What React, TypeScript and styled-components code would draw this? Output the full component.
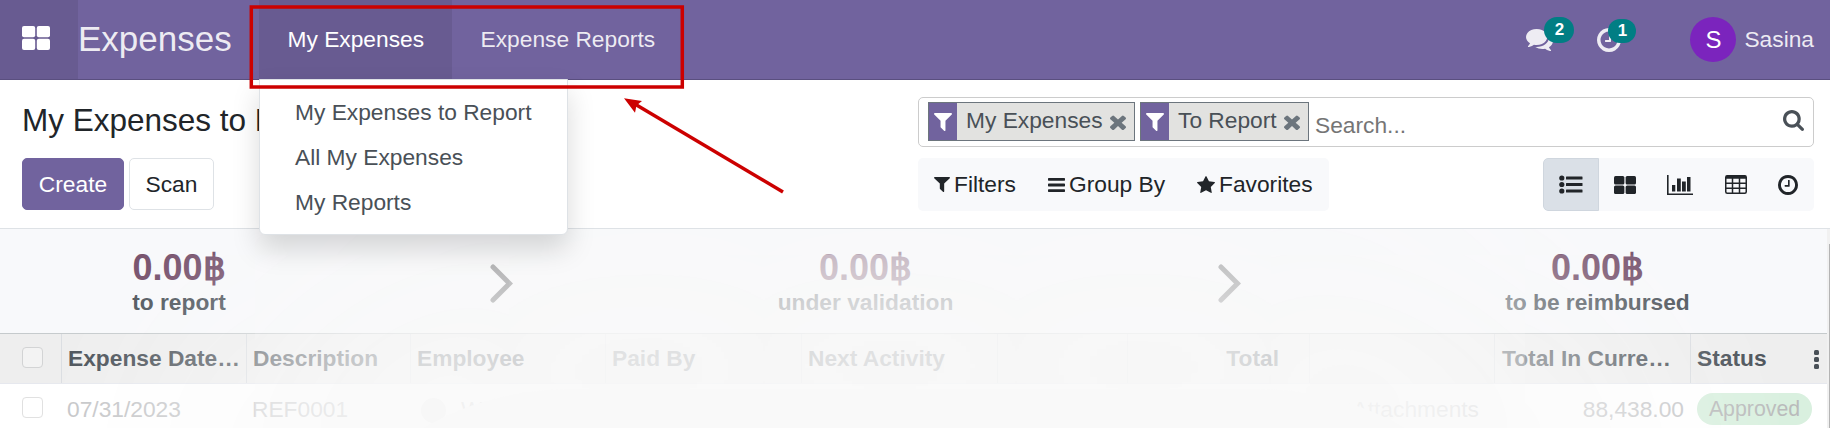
import React from 'react';
import styled, { createGlobalStyle } from 'styled-components';

const Global = createGlobalStyle`
  *, *::before, *::after { box-sizing: border-box; }
  body { margin: 0; background: #fff; overflow: hidden; }
`;

const Page = styled.div`
  position: relative;
  width: 1830px;
  height: 428px;
  overflow: hidden;
  display: flex;
  flex-direction: column;
  background: #fff;
  color: #212529;
  font: 22.75px/1.5 "Liberation Sans", Arial, sans-serif;
  white-space: nowrap;
`;

const Navbar = styled.header`
  display: flex;
  flex: none;
  height: 80px;
  background: #71639e;
  border-bottom: 1px solid #5a4f7f;
  color: rgba(255, 255, 255, 0.88);
`;

const AppsButton = styled.div`
  width: 78px;
  padding: 25px 0 0 22px;
  background: rgba(0, 0, 0, 0.08);
  color: #fff;
`;

const Brand = styled.div`
  width: 181px;
  font-size: 35px;
  line-height: 78px;
`;

const MenuEntry = styled.div<{ $active?: boolean }>`
  position: relative;
  padding: 0 28px 0 28.5px;
  line-height: 78px;
  color: ${(p) => (p.$active ? '#fff' : 'inherit')};
  background: ${(p) => (p.$active ? 'rgba(0, 0, 0, 0.08)' : 'none')};
`;

const Dropdown = styled.div`
  position: absolute;
  z-index: 5;
  top: 79px;
  left: 0;
  width: 309px;
  height: 156px;
  padding-top: 11px;
  background: #fff;
  border: 1px solid #dee2e6;
  border-radius: 0 0 6px 6px;
  box-shadow: 0 14px 28px rgba(0, 0, 0, 0.15);
  color: #495057;
`;

const DropdownItem = styled.div`
  height: 45px;
  padding-left: 35px;
  line-height: 43px;
`;

const Systray = styled.div`
  display: flex;
  align-items: center;
  margin-left: auto;
  padding-right: 16px;
`;

const TrayItem = styled.div<{ $gap: number }>`
  position: relative;
  display: flex;
  margin-right: ${(p) => p.$gap}px;
`;

const Counter = styled.span<{ $w: number; $h: number; $x: number; $y: number }>`
  position: absolute;
  left: ${(p) => p.$x}px;
  top: ${(p) => p.$y}px;
  width: ${(p) => p.$w}px;
  height: ${(p) => p.$h}px;
  border-radius: 13px;
  background: #017e84;
  color: #fff;
  font-size: 17px;
  font-weight: 700;
  line-height: ${(p) => p.$h}px;
  text-align: center;
`;

const Avatar = styled.div`
  width: 46px;
  height: 45px;
  margin-right: 8px;
  border-radius: 50%;
  background: #7b24bd;
  color: #fff;
  font-size: 24px;
  line-height: 45px;
  text-align: center;
`;

const ControlPanel = styled.section`
  display: flex;
  flex: none;
  justify-content: space-between;
  height: 149px;
  padding: 17px 16px 0 22px;
  border-bottom: 1px solid #dee2e6;
`;

const Title = styled.h1`
  height: 61px;
  margin: 0;
  font-size: 31.5px;
  font-weight: 400;
  line-height: 47px;
`;

const ButtonRow = styled.div`
  display: flex;
  gap: 5px;
`;

const Button = styled.button<{ $primary?: boolean }>`
  height: 52px;
  width: ${(p) => (p.$primary ? 102 : 85)}px;
  padding: 0;
  border: 1px solid ${(p) => (p.$primary ? '#71639e' : '#dee2e6')};
  border-radius: 5px;
  background: ${(p) => (p.$primary ? '#71639e' : '#fff')};
  color: ${(p) => (p.$primary ? '#fff' : '#212529')};
  font: inherit;
`;

const SearchColumn = styled.div`
  display: flex;
  flex-direction: column;
  gap: 11px;
  width: 896px;
`;

const SearchBox = styled.div`
  display: flex;
  height: 50px;
  padding: 4px 9px 0 9px;
  border: 1px solid #ccc;
  border-radius: 5px;
`;

const Facet = styled.div<{ $w: number }>`
  display: flex;
  width: ${(p) => p.$w}px;
  height: 39px;
  margin-right: 5px;
  border: 1px solid #6c757d;
  background: #e2e2e0;
  color: #495057;
  line-height: 34px;
`;

const FacetIcon = styled.span`
  display: flex;
  align-items: center;
  justify-content: center;
  width: 28px;
  height: 37px;
  margin-right: 9px;
  background: #71639e;
  color: #fff;
`;

const FacetClose = styled.span`
  display: flex;
  margin: 11px 0 0 7px;
  color: #6c757d;
`;

const SearchButton = styled.span`
  padding-top: 8px;
  color: #495057;
  line-height: 0;
`;

const Placeholder = styled.span`
  flex: 1;
  padding: 6px 0 0 1px;
  color: #757575;
`;

const Tools = styled.div`
  display: flex;
  justify-content: space-between;
  height: 53px;
`;

const FilterBar = styled.div`
  display: flex;
  align-items: center;
  width: 411px;
  padding-left: 16px;
  border-radius: 5px;
  background: #f8f9fb;
`;

const FilterItem = styled.div<{ $w: number }>`
  display: flex;
  align-items: center;
  width: ${(p) => p.$w}px;
  gap: 4px;
`;

const Switcher = styled.div`
  display: flex;
  border-radius: 5px;
  background: #f8f9fb;
  overflow: hidden;
`;

const ViewButton = styled.div<{ $w: number; $active?: boolean }>`
  display: flex;
  align-items: center;
  justify-content: center;
  width: ${(p) => p.$w}px;
  border: 1px solid ${(p) => (p.$active ? '#cfd6de' : 'transparent')};
  border-radius: ${(p) => (p.$active ? '5px 0 0 5px' : '0')};
  background: ${(p) => (p.$active ? '#dae0e7' : 'none')};
`;

const Content = styled.main`
  position: relative;
  flex: 1;
  width: 1827px;
  overflow: hidden;
`;

const Summary = styled.div`
  display: flex;
  align-items: flex-start;
  justify-content: space-around;
  height: 105px;
  padding: 18px 5px 0 0;
  background: #f8f9fb;
  border-bottom: 1px solid #c5cacc;
  font-weight: 700;
  text-align: center;
`;

const Amount = styled.div`
  color: #714b67;
  font-size: 36px;
  line-height: 42px;
`;

const AmountLabel = styled.div`
  color: #495057;
  line-height: 27px;
`;

const columns = '61px 185px 164px 195px 196px 196px 130px 182px 185px 196px 137px';

const HeaderRow = styled.div`
  display: grid;
  grid-template-columns: ${columns};
  height: 50px;
  background: #eee;
  border-bottom: 1px solid #e6e8ee;
  color: #495057;
  font-weight: 700;
  line-height: 48px;
`;

const BodyRow = styled.div`
  display: grid;
  grid-template-columns: ${columns};
  height: 50px;
  color: #c4c5c7;
  line-height: 51px;
`;

const Cell = styled.div<{ $right?: number; $line?: boolean; $left?: number }>`
  display: flex;
  align-items: flex-start;
  justify-content: ${(p) => (p.$right ? 'flex-end' : 'flex-start')};
  padding-left: ${(p) => p.$left ?? 6}px;
  padding-right: ${(p) => p.$right ?? 0}px;
  border-left: 1px solid ${(p) => (p.$line ? '#dadde1' : 'transparent')};
`;

const Checkbox = styled.span<{ $faint?: boolean }>`
  width: 21px;
  height: 21px;
  margin-top: 13px;
  border: 1px solid ${(p) => (p.$faint ? '#e0e0e0' : '#d2d3d4')};
  border-radius: 4px;
  background: ${(p) => (p.$faint ? '#fff' : '#f3f3f3')};
`;

const Person = styled.span`
  width: 25px;
  height: 25px;
  margin: 14px 15px 0 4px;
  border-radius: 50%;
  background: #e9e9e9;
`;

const StatusPill = styled.span`
  width: 115px;
  height: 32px;
  margin-top: 9px;
  border-radius: 16px;
  background: #d9f0df;
  color: #b9bbbb;
  font-size: 21.3px;
  line-height: 33px;
  text-align: center;
`;

const Dots = styled.span`
  display: flex;
  flex-direction: column;
  gap: 2px;
  margin: 16px 8px 0 auto;
`;

const Dot = styled.i`
  width: 5px;
  height: 5px;
  border-radius: 1.5px;
  background: #495057;
`;

const Veil = styled.div`
  position: absolute;
  left: 345px;
  top: 160px;
  width: 1138px;
  height: 800px;
  border-radius: 20%;
  background: #f9f9f9;
  box-shadow: 0 0 210px 175px #f9f9f9;
`;

const ScrollTrack = styled.div`
  position: absolute;
  right: 0;
  top: 229px;
  width: 3px;
  height: 199px;
  padding-top: 15px;
  background: #f1f1f1;
`;

const ScrollThumb = styled.div`
  height: 100%;
  margin-left: 2px;
  background: #b4b4b4;
`;

const Annotation = styled.svg`
  position: absolute;
  inset: 0;
  z-index: 10;
`;

const paths = {
  bars: 'M1664 1344v128q0 26-19 45t-45 19H192q-26 0-45-19t-19-45v-128q0-26 19-45t45-19h1408q26 0 45 19t19 45zm0-512v128q0 26-19 45t-45 19H192q-26 0-45-19t-19-45V832q0-26 19-45t45-19h1408q26 0 45 19t19 45zm0-512v128q0 26-19 45t-45 19H192q-26 0-45-19t-19-45V320q0-26 19-45t45-19h1408q26 0 45 19t19 45z',
  clock: 'M1024 544v448q0 14-9 23t-23 9H672q-14 0-23-9t-9-23v-64q0-14 9-23t23-9h224V544q0-14 9-23t23-9h64q14 0 23 9t9 23zm416 352q0-148-73-273t-198-198-273-73-273 73-198 198-73 273 73 273 198 198 273 73 273-73 198-198 73-273zm224 0q0 209-103 385.500T1281.500 1561 896 1664t-385.500-103T231 1281.500 128 896t103-385.500T510.500 231 896 128t385.500 103T1561 510.500 1664 896z',
  comments: 'M1408 768q0 139-94 257t-256.500 186.500T704 1280q-86 0-176-16-124 88-278 128-36 9-86 16h-3q-11 0-20.500-8t-11.500-21q-1-3-1-6.500t.5-6.500 2-6l2.500-5 3.500-5.500 4-5 4.500-5 4-4.500q5-6 23-25t26-29.500 22.500-29 25-38.500 20.500-44q-124-72-195-177T0 768q0-139 94-257t256.500-186.500T704 256t353.500 68.500T1314 511t94 257zm384 256q0 120-71 224.500T1526 1425q10 24 20.500 44t25 38.500 22.500 29 26 29.500 23 25q1 1 4 4.500t4.500 5 4 5 3.500 5.500l2.500 5 2 6 .5 6.500-1 6.500q-3 14-13 22t-22 7q-50-7-86-16-154-40-278-128-90 16-176 16-271 0-472-132 58 4 88 4 161 0 309-45t264-129q125-92 192-212t67-254q0-77-23-152 129 71 204 178t75 230z',
  search: 'M1216 832q0-185-131.500-316.500T768 384 451.500 515.500 320 832t131.500 316.500T768 1280t316.500-131.500T1216 832zm512 832q0 52-38 90t-90 38q-54 0-90-38l-343-342q-179 124-399 124-143 0-273.500-55.500t-225-150-150-225T64 832t55.500-273.500 150-225 225-150T768 128t273.500 55.500 225 150 150 225T1472 832q0 220-124 399l343 343q37 37 37 90z',
  star: 'M1728 647q0 22-26 48l-363 354 86 500q1 7 1 20 0 21-10.500 35.500T1385 1619q-19 0-40-12l-449-236-449 236q-22 12-40 12-21 0-31.500-14.500T365 1569q0-6 2-20l86-500L89 695q-25-27-25-48 0-37 56-46l502-73L847 73q19-41 49-41t49 41l225 455 502 73q56 9 56 46z',
  times: 'M1490 1322q0 40-28 68l-136 136q-28 28-68 28t-68-28l-294-294-294 294q-28 28-68 28t-68-28l-136-136q-28-28-28-68t28-68l294-294-294-294q-28-28-28-68t28-68l136-136q28-28 68-28t68 28l294 294 294-294q28-28 68-28t68 28l136 136q28 28 28 68t-28 68l-294 294 294 294q28 28 28 68z',
  filter: 'M1595 295q17 41-14 70l-493 493v742q0 42-39 59-13 5-25 5-27 0-45-19l-256-256q-19-19-19-45V858L211 365q-31-29-14-70 17-39 59-39h1280q42 0 59 39z',
};

const boxes: Record<keyof typeof paths, string> = {
  bars: '128 256 1536 1280',
  clock: '128 128 1536 1536',
  comments: '0 256 1792 1408',
  search: '64 128 1664 1664',
  star: '64 32 1664 1587',
  times: '302 238 1188 1316',
  filter: '192 256 1408 1408',
};

const Icon = ({ name, w, h }: { name: keyof typeof paths; w: number; h: number }) => (
  <svg width={w} height={h} viewBox={boxes[name]} preserveAspectRatio="none" fill="currentColor">
    <path d={paths[name]} />
  </svg>
);

const Tiles = ({ w, h }: { w: number; h: number }) => (
  <svg width={w} height={h} viewBox="0 0 28 24" preserveAspectRatio="none" fill="currentColor">
    <rect width="13.200" height="11.200" rx="2" />
    <rect x="14.800" width="13.200" height="11.200" rx="2" />
    <rect y="12.800" width="13.200" height="11.200" rx="2" />
    <rect x="14.800" y="12.800" width="13.200" height="11.200" rx="2" />
  </svg>
);

const ListIcon = () => (
  <svg width="24" height="19" viewBox="0 0 24 19" fill="currentColor">
    {[3, 9.5, 16].map((y) => (
      <g key={y}>
        <circle cx="2.8" cy={y} r="2.6" />
        <rect x="7" y={y - 1.6} width="16.5" height="3.2" rx=".5" />
      </g>
    ))}
  </svg>
);

const ChartIcon = () => (
  <svg width="26" height="20" viewBox="0 0 26 20" fill="currentColor">
    <path d="M0 0h1.600v18.400H26V20H0z" />
    <rect x="5" y="10" width="3.300" height="6.500" />
    <rect x="10" y="3.500" width="3.800" height="13" />
    <rect x="15" y="6.500" width="3.800" height="10" />
    <rect x="20" y="2" width="3.500" height="14.500" />
  </svg>
);

const TableIcon = () => (
  <svg width="22" height="19" viewBox="0 0 22 19" fill="none" stroke="currentColor" strokeWidth="1.500">
    <rect x=".75" y=".75" width="20.500" height="17.500" rx="1.500" />
    <path d="M1 2.200h20" strokeWidth="3" />
    <path d="M1 8.300h20M1 13.300h20M7.500 3v15M14.500 3v15" />
  </svg>
);

const ChevronMark = styled.svg`
  margin-top: 16px;
`;

const Chevron = () => (
  <ChevronMark width="23" height="40" viewBox="0 0 23 40" fill="none" stroke="#5c5d60" strokeWidth="5" strokeLinecap="round">
    <path d="M3 4l16.500 16.500L3 37" />
  </ChevronMark>
);

const Total = ({ amount, label }: { amount: string; label: string }) => (
  <div>
    <Amount>{amount}</Amount>
    <AmountLabel>{label}</AmountLabel>
  </div>
);

export default function App() {
  return (
    <Page>
      <Global />
      <Navbar>
        <AppsButton><Tiles w={28} h={24} /></AppsButton>
        <Brand>Expenses</Brand>
        <MenuEntry $active>
          My Expenses
          <Dropdown>
            <DropdownItem>My Expenses to Report</DropdownItem>
            <DropdownItem>All My Expenses</DropdownItem>
            <DropdownItem>My Reports</DropdownItem>
          </Dropdown>
        </MenuEntry>
        <MenuEntry>Expense Reports</MenuEntry>
        <Systray>
          <TrayItem $gap={44}>
            <Icon name="comments" w={27} h={22} />
            <Counter $w={30} $h={26} $x={18} $y={-12}>2</Counter>
          </TrayItem>
          <TrayItem $gap={69}>
            <Icon name="clock" w={24} h={24} />
            <Counter $w={28} $h={24} $x={11} $y={-9}>1</Counter>
          </TrayItem>
          <Avatar>S</Avatar>
          Sasina
        </Systray>
      </Navbar>

      <ControlPanel>
        <div>
          <Title>My Expenses to Report</Title>
          <ButtonRow>
            <Button $primary>Create</Button>
            <Button>Scan</Button>
          </ButtonRow>
        </div>
        <SearchColumn>
          <SearchBox>
            <Facet $w={207}>
              <FacetIcon><Icon name="filter" w={18} h={18} /></FacetIcon>
              My Expenses
              <FacetClose><Icon name="times" w={16} h={16} /></FacetClose>
            </Facet>
            <Facet $w={169}>
              <FacetIcon><Icon name="filter" w={18} h={18} /></FacetIcon>
              To Report
              <FacetClose><Icon name="times" w={16} h={16} /></FacetClose>
            </Facet>
            <Placeholder>Search...</Placeholder>
            <SearchButton><Icon name="search" w={21} h={21} /></SearchButton>
          </SearchBox>
          <Tools>
            <FilterBar>
              <FilterItem $w={114}><Icon name="filter" w={16} h={15} />Filters</FilterItem>
              <FilterItem $w={149}><Icon name="bars" w={17} h={14} />Group By</FilterItem>
              <FilterItem $w={116}><Icon name="star" w={18} h={17} />Favorites</FilterItem>
            </FilterBar>
            <Switcher>
              <ViewButton $w={56} $active><ListIcon /></ViewButton>
              <ViewButton $w={52}><Tiles w={22} h={18} /></ViewButton>
              <ViewButton $w={58}><ChartIcon /></ViewButton>
              <ViewButton $w={53}><TableIcon /></ViewButton>
              <ViewButton $w={52}><Icon name="clock" w={20} h={20} /></ViewButton>
            </Switcher>
          </Tools>
        </SearchColumn>
      </ControlPanel>

      <Content>
        <Summary>
          <Total amount="0.00฿" label="to report" />
          <Chevron />
          <Total amount="0.00฿" label="under validation" />
          <Chevron />
          <Total amount="0.00฿" label="to be reimbursed" />
        </Summary>
        <HeaderRow>
          <Cell $left={21}><Checkbox /></Cell>
          <Cell $line>Expense Date…</Cell>
          <Cell $line>Description</Cell>
          <Cell $line>Employee</Cell>
          <Cell $line>Paid By</Cell>
          <Cell $line>Next Activity</Cell>
          <Cell $line />
          <Cell $line $right={30}>Total</Cell>
          <Cell $line />
          <Cell $line $left={7}>Total In Curre…</Cell>
          <Cell $line>Status<Dots><Dot /><Dot /><Dot /></Dots></Cell>
        </HeaderRow>
        <BodyRow>
          <Cell $left={21}><Checkbox $faint /></Cell>
          <Cell $left={5}>07/31/2023</Cell>
          <Cell $left={5}>REF0001</Cell>
          <Cell><Person />W</Cell>
          <Cell />
          <Cell />
          <Cell />
          <Cell />
          <Cell $right={15}>2 Attachments</Cell>
          <Cell $right={6}>88,438.00</Cell>
          <Cell><StatusPill>Approved</StatusPill></Cell>
        </BodyRow>
        <Veil />
      </Content>

      <ScrollTrack><ScrollThumb /></ScrollTrack>
      <Annotation width="1830" height="428" viewBox="0 0 1830 428">
        <rect x="251.300" y="7" width="431" height="80" fill="none" stroke="#c00" strokeWidth="3.500" />
        <path d="M783 192L634 103.500" stroke="#c00" strokeWidth="3.500" />
        <path d="M624 98.300L642 101L636.500 105.500L635 112.700z" fill="#c00" />
      </Annotation>
    </Page>
  );
}
